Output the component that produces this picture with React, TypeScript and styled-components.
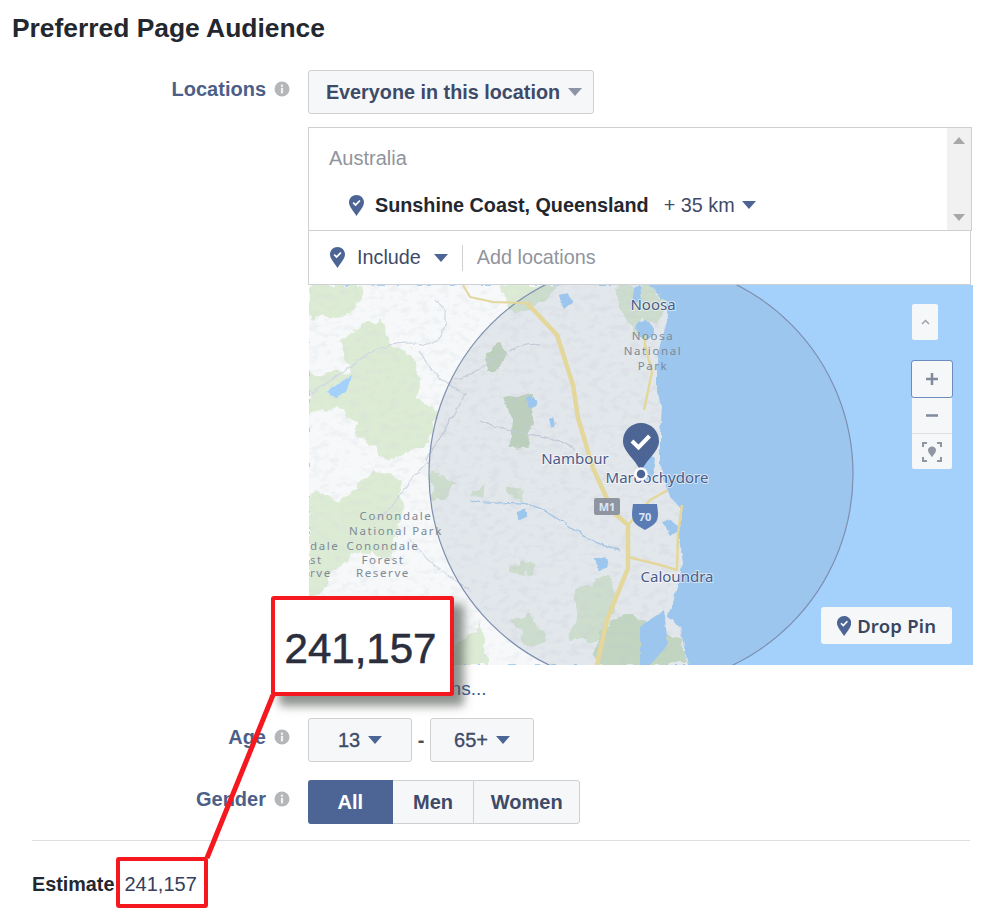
import React from 'react';
import styled, { createGlobalStyle } from 'styled-components';

const GlobalStyle = createGlobalStyle`
  html, body {
    margin: 0;
    background: #fff;
  }
  body {
    font-family: "Liberation Sans", Arial, sans-serif;
  }
`;

const Page = styled.div`
  position: relative;
  width: 990px;
  height: 912px;
  overflow: hidden;
`;

const Title = styled.h1`
  margin: 0;
  padding: 12px 0 0 12px;
  height: 70px;
  box-sizing: border-box;
  font-size: 26.4px;
  line-height: 32px;
  font-weight: 700;
  color: #23272f;
`;

const Row = styled.div`
  display: grid;
  grid-template-columns: 308px 1fr;
  margin-bottom: ${p => p.$gap ?? 0}px;
`;

const LabelCell = styled.div`
  display: flex;
  justify-content: flex-end;
  align-items: center;
  gap: 8px;
  height: 38px;
  padding-right: 18px;
  font-size: 20px;
  font-weight: 700;
  color: #4d5f88;
`;

const Select = styled.div`
  display: inline-flex;
  align-items: center;
  justify-content: center;
  gap: 8px;
  box-sizing: border-box;
  width: ${p => p.$w}px;
  height: 44px;
  padding-left: ${p => p.$inset ?? 0}px;
  background: #f6f7f9;
  border: 1px solid #ced0d4;
  border-radius: 3px;
  font-size: ${p => (p.$light ? 20 : 19.8)}px;
  font-weight: ${p => (p.$light ? 400 : 700)};
  -webkit-text-stroke: ${p => (p.$light ? '0.35px' : '0')};
  color: #3f4a68;
`;

const Controls = styled.div`
  display: flex;
  align-items: center;
`;

const Dash = styled.span`
  width: 18px;
  text-align: center;
  font-size: 20px;
  font-weight: 700;
  color: #4b4f56;
`;

const LocationPanel = styled.div`
  width: 664px;
  margin-top: 13px;
`;

const SelectedBox = styled.div`
  display: flex;
  box-sizing: border-box;
  height: 104px;
  border: 1px solid #ced0d4;
`;

const SelectedList = styled.div`
  flex: 1;
  padding: 16px 0 0 20px;
`;

const Country = styled.div`
  font-size: 20px;
  line-height: 28px;
  color: #90949c;
`;

const Place = styled.div`
  display: flex;
  align-items: center;
  margin: 19px 0 0 20px;
  height: 28px;
`;

const PlaceName = styled.b`
  margin-left: 11px;
  font-size: 19.8px;
  color: #23272f;
`;

const Radius = styled.span`
  margin: 0 7px 0 15px;
  font-size: 19.8px;
  color: #3f4a68;
`;

const Scrollbar = styled.div`
  display: flex;
  flex-direction: column;
  justify-content: space-between;
  align-items: center;
  width: 24px;
  padding: 9px 0;
  box-sizing: border-box;
  background: #f1f1f1;
`;

const IncludeRow = styled.div`
  display: flex;
  align-items: center;
  box-sizing: border-box;
  width: 663px;
  height: 54px;
  padding-left: 21px;
  border: 1px solid #ced0d4;
  border-top: 0;
`;

const IncludeText = styled.span`
  margin: 0 13px 0 12px;
  font-size: 19.8px;
  color: #3f4a68;
`;

const Separator = styled.span`
  width: 1px;
  height: 26px;
  margin: 0 14px;
  background: #ced0d4;
`;

const Placeholder = styled.span`
  font-size: 19.8px;
  color: #90949c;
`;

const MapBox = styled.div`
  position: relative;
  width: 664px;
  height: 380px;
  margin-left: 1px;
  overflow: hidden;
  background: #a3d1fc;
`;

const MapSvg = styled.svg`
  display: block;
`;

const PlaceLabel = styled.text`
  font-family: "Noto Sans", sans-serif;
  font-size: 15px;
  fill: #4a5c88;
  text-anchor: middle;
  paint-order: stroke;
  stroke: rgba(255, 255, 255, 0.55);
  stroke-width: 2px;
`;

const ParkLabel = styled.text`
  font-family: "Noto Sans", sans-serif;
  font-size: 11.5px;
  letter-spacing: 1.6px;
  fill: #7d8a97;
  text-anchor: ${p => (p.$start ? 'start' : 'middle')};
`;

const ShieldLabel = styled.text`
  font-family: "Noto Sans", sans-serif;
  font-size: 11px;
  font-weight: 700;
  fill: #dce7f5;
  text-anchor: middle;
`;

const MapButton = styled.div`
  position: absolute;
  left: 603px;
  top: 19px;
  display: flex;
  align-items: center;
  justify-content: center;
  width: 26px;
  height: 36px;
  background: #f6f7f9;
  border-radius: 2px;
`;

const ZoomStack = styled.div`
  position: absolute;
  left: 603px;
  top: 76px;
  width: 40px;
  background: #f6f7f9;
  border-radius: 2px;
`;

const ZoomButton = styled.div`
  display: flex;
  align-items: center;
  justify-content: center;
  height: 36px;
  box-sizing: border-box;
  border-top: ${p => (p.$first ? '0' : '1px solid #dddfe2')};
  outline: ${p => (p.$focus ? '1.5px solid #6d8dc0' : '0')};
  border-radius: ${p => (p.$focus ? '2px' : '0')};
`;

const DropPin = styled.div`
  position: absolute;
  right: 21px;
  bottom: 21px;
  display: flex;
  align-items: center;
  justify-content: center;
  gap: 6px;
  width: 131px;
  height: 37px;
  background: #f6f7f9;
  border-radius: 3px;
  font-family: "Noto Sans", sans-serif;
  font-size: 18.5px;
  font-weight: 600;
  color: #3a4560;
  letter-spacing: 0.2px;
`;

const BulkLink = styled.div`
  height: 53px;
  line-height: 47px;
  font-size: 19px;
  color: #3b5998;
`;

const Segmented = styled.div`
  display: flex;
  width: 272px;
  height: 44px;
  box-sizing: border-box;
  border: 1px solid #ced0d4;
  border-radius: 3px;
  background: #f6f7f9;
`;

const Segment = styled.div`
  display: flex;
  align-items: center;
  justify-content: center;
  width: ${p => p.$w}px;
  margin: ${p => (p.$active ? '-1px 0 -1px -1px' : '0')};
  font-size: 20px;
  font-weight: 700;
  border-radius: ${p => (p.$active ? '3px 0 0 3px' : '0')};
  border-left: ${p => (p.$divider ? '1px solid #ced0d4' : '0')};
  color: ${p => (p.$active ? '#fff' : '#3f4a68')};
  background: ${p => (p.$active ? '#4d6595' : 'transparent')};
`;

const Divider = styled.hr`
  width: 938px;
  margin: 16px 0 0 32px;
  border: 0;
  border-top: 1px solid #dddfe2;
`;

const EstimateRow = styled.div`
  display: flex;
  gap: 10px;
  padding: 31px 0 0 32px;
  line-height: 24px;
  font-size: 20px;
  color: #34405c;
`;

const EstimateLabel = styled.b`
  font-size: 19.8px;
  color: #23272f;
`;

const SmallHighlight = styled.div`
  position: absolute;
  left: 116px;
  top: 857px;
  width: 92px;
  height: 51px;
  box-sizing: border-box;
  border: 4px solid #f5191f;
  border-radius: 3px;
`;

const Callout = styled.div`
  position: absolute;
  left: 271px;
  top: 596px;
  display: flex;
  align-items: center;
  justify-content: center;
  box-sizing: border-box;
  width: 183px;
  height: 100px;
  padding: 6px 4px 0 0;
  background: #fff;
  border: 4px solid #f5191f;
  border-radius: 3px;
  box-shadow: 9px 9px 10px 1px rgba(75, 80, 75, 0.62);
  font-size: 42px;
  color: #2b2e3c;
  -webkit-text-stroke: 0.6px #2b2e3c;
`;

const Leader = styled.svg`
  position: absolute;
  left: 200px;
  top: 690px;
`;

const InfoIcon = () => (
  <svg width="16" height="16" viewBox="0 0 16 16">
    <circle cx="8" cy="8" r="7.5" fill="#b4b7b8" />
    <rect x="6.9" y="6.8" width="2.2" height="5.6" fill="#f2f2f2" />
    <rect x="6.9" y="3.6" width="2.2" height="2.1" fill="#f2f2f2" />
  </svg>
);

const Caret = ({ color = '#4d6595' }: { color?: string }) => (
  <svg width="14" height="8" viewBox="0 0 14 8">
    <path d="M0 0h14L7 8z" fill={color} />
  </svg>
);

const Pin = ({ size = 21 }: { size?: number }) => (
  <svg width={(size * 15) / 21} height={size} viewBox="0 0 15 21">
    <path d="M7.5 0C3.4 0 0 3.2 0 7.3c0 4.6 4.6 9 7.5 13.7C10.400 16.300 15 11.900 15 7.300 15 3.200 11.600 0 7.500 0z" fill="#4d6595" />
    <path d="M4.200 7.600l2.400 2.400 4.300-4.500" fill="none" stroke="#fff" strokeWidth="1.800" />
  </svg>
);

const COAST =
  'M309 285H648L662 300 668 318 660 345 657 367 657 393 662 407 660 433 660 467 670 497 682 510 678 533 683 563 673 603 667 617 680 627 688 665H309z';

const MapArt = () => (
  <MapSvg width="664" height="380" viewBox="309 285 664 380">
    <defs>
      <clipPath id="radius">
        <circle cx="641" cy="474" r="212" />
      </clipPath>
      <clipPath id="land">
        <path d={COAST} />
      </clipPath>
      <filter id="rough" x="-5%" y="-5%" width="110%" height="110%">
        <feTurbulence type="fractalNoise" baseFrequency="0.07" numOctaves="3" seed="4" />
        <feDisplacementMap in="SourceGraphic" scale="14" xChannelSelector="R" yChannelSelector="G" />
      </filter>
      <filter id="fine" x="-5%" y="-5%" width="110%" height="110%">
        <feTurbulence type="fractalNoise" baseFrequency="0.12" numOctaves="2" seed="9" />
        <feDisplacementMap in="SourceGraphic" scale="5" xChannelSelector="R" yChannelSelector="G" />
      </filter>
      <filter id="relief" x="0" y="0" width="100%" height="100%">
        <feTurbulence type="fractalNoise" baseFrequency="0.1 0.16" numOctaves="3" seed="12" />
        <feColorMatrix values="0 0 0 0 0.66  0 0 0 0 0.69  0 0 0 0 0.74  4 0 0 0 -2" />
      </filter>
    </defs>
    {/* land, east edge follows the coast */}
    <path d={COAST} fill="#f6f8f9" filter="url(#fine)" />
    {/* parks */}
    <g fill="#dcebd4" filter="url(#rough)">
      <path d="M309 285H362L358 310 330 322 318 315 309 322z" />
      <path d="M340 340L382 315 390 345 418 362 414 398 437 412 430 442 387 462 357 432 345 412 309 410 309 375 350 372z" />
      <path d="M309 490L340 500 375 470 402 480 400 520 392 560 360 552 335 565 325 590 309 600z" />
      <path d="M486 352L500 342 510 358 495 372 487 372z" fill="#c9dcc0" />
      <path d="M505 395L535 392 532 420 530 445 508 448 510 420z" fill="#c9dcc0" />
      <path d="M432 470L455 482 450 500 432 500zM470 490L485 485 482 498 468 497zM508 490L520 485 522 500 510 498z" />
      <path d="M505 565L535 562 530 572 508 574z" />
      <path d="M575 590L610 575 616 610 596 640 570 640 575 615z" />
      <path d="M600 630L625 612 655 630 680 640 688 665H595z" fill="#cfe3c6" />
      <path d="M510 620L530 612 548 640 530 650z" />
      <path d="M615 285H650L664 302 660 325 640 320 640 340 625 318z" />
      <path d="M500 285H560L540 305 520 315 505 305z" />
      <path d="M455 645L480 625 490 665H450z" />
    </g>
    <rect x="309" y="285" width="380" height="380" filter="url(#relief)" clipPath="url(#land)" opacity="0.22" />
    <g fill="#a3d1fc" filter="url(#fine)">
      <path d="M326 392L352 375 346 392 336 397z" />
      <path d="M558 295L568 293 574 304 564 308z" />
      <path d="M527 399L534 396 537 404 530 410zM549 420L553 418 555 425 551 427z" />
      <path d="M516 512L526 508 528 516 520 520zM595 559L605 556 608 566 598 572z" />
      <circle cx="645" cy="330" r="9" />
      <path d="M640 458C648 452 656 456 656 466L650 480 640 476z" />
      <path d="M662 522L672 520 680 530 670 536zM640 627L664 610 668 645 650 665 640 665z" />
      <path d="M634 288L640 285 642 300 632 304z" />
    </g>
    {/* rivers */}
    <g fill="none" stroke="#d0d7e2" strokeWidth="1.200" filter="url(#fine)">
      <path d="M309 395C325 385 352 365 375 350 392 345 405 340 428 345 445 340 455 310 435 300" />
      <path d="M420 350C430 375 445 380 465 395 455 410 440 440 425 460" />
      <path d="M430 460C410 475 395 510 375 520" />
      <path d="M470 500C500 510 520 490 560 520 590 540 600 545 620 550" stroke="#a9cdf0" />
      <path d="M480 420C520 440 550 430 575 450M455 380C490 370 510 340 540 345" />
      <path d="M410 540C430 565 440 570 470 590" />
    </g>
    {/* radius overlay */}
    <g clipPath="url(#radius)">
      <rect x="309" y="285" width="664" height="380" fill="#7f8da5" fillOpacity="0.16" />
    </g>
    <circle cx="641" cy="474" r="212" fill="none" stroke="#7e8fb0" strokeWidth="1.200" />
    {/* roads */}
    <g fill="none" stroke="#e4d79b" strokeLinejoin="round">
      <path d="M463 285L470 297 493 302 527 303" strokeWidth="2" />
      <path d="M527 303L557 335 573 385 578 418 593 468 613 512 628 525 628 568 607 620 597 665" strokeWidth="4.500" />
      <path d="M628 557L660 565 677 570 678 533 682 505" strokeWidth="2.500" />
      <path d="M645 335L645 345 652 372 644 410" strokeWidth="2.500" />
      <path d="M628 525L650 500 668 490" strokeWidth="2.500" />
    </g>
    <PlaceLabel x="653" y="310">Noosa</PlaceLabel>
    <ParkLabel x="653" y="340">Noosa</ParkLabel>
    <ParkLabel x="653" y="355">National</ParkLabel>
    <ParkLabel x="653" y="370">Park</ParkLabel>
    <ParkLabel x="396" y="520">Conondale</ParkLabel>
    <ParkLabel x="396" y="535">National Park</ParkLabel>
    <ParkLabel x="383" y="550">Conondale</ParkLabel>
    <ParkLabel x="383" y="564">Forest</ParkLabel>
    <ParkLabel x="383" y="577">Reserve</ParkLabel>
    <ParkLabel $start x="310" y="550">dale</ParkLabel>
    <ParkLabel $start x="310" y="564">st</ParkLabel>
    <ParkLabel $start x="310" y="577">rve</ParkLabel>
    <PlaceLabel x="575" y="464">Nambour</PlaceLabel>
    <PlaceLabel x="657" y="483">Maroochydore</PlaceLabel>
    <PlaceLabel x="677" y="582">Caloundra</PlaceLabel>
    {/* highway shields */}
    <rect x="594" y="498" width="26" height="17" rx="2" fill="#8f95a0" />
    <ShieldLabel x="607" y="511">M1</ShieldLabel>
    <path d="M633 504h24c1 8 2 13-1 18-3 4-8 6-11 8-3-2-8-4-11-8-3-5-2-10-1-18z" fill="#5b7bb5" />
    <ShieldLabel x="645" y="521">70</ShieldLabel>
    {/* main marker */}
    <path
      d="M641 423c-10 0-18 8-18 18 0 11 12 17 18 31 6-14 18-20 18-31 0-10-8-18-18-18z"
      fill="#4d6595"
    />
    <path d="M632 441l6.500 6.500 11-11.500" fill="none" stroke="#fff" strokeWidth="4" />
    <circle cx="641" cy="474" r="5.500" fill="#4d6595" stroke="#fff" strokeWidth="2.500" />
  </MapSvg>
);

export default function App() {
  return (
    <Page>
      <GlobalStyle />
      <Title>Preferred Page Audience</Title>

      <Row>
        <LabelCell>
          Locations <InfoIcon />
        </LabelCell>
        <Select $w={286} $inset={6}>
          Everyone in this location <Caret color="#8d94a5" />
        </Select>
      </Row>

      <Row>
        <div />
        <LocationPanel>
          <SelectedBox>
            <SelectedList>
              <Country>Australia</Country>
              <Place>
                <Pin />
                <PlaceName>Sunshine Coast, Queensland</PlaceName>
                <Radius>+ 35 km</Radius>
                <Caret />
              </Place>
            </SelectedList>
            <Scrollbar>
              <svg width="12" height="7" viewBox="0 0 12 7"><path d="M6 0l6 7H0z" fill="#a8a8a8" /></svg>
              <svg width="12" height="7" viewBox="0 0 12 7"><path d="M0 0h12L6 7z" fill="#a8a8a8" /></svg>
            </Scrollbar>
          </SelectedBox>
          <IncludeRow>
            <Pin />
            <IncludeText>Include</IncludeText>
            <Caret />
            <Separator />
            <Placeholder>Add locations</Placeholder>
          </IncludeRow>
          <MapBox>
            <MapArt />
            <MapButton>
              <svg width="9" height="6" viewBox="0 0 9 6">
                <path d="M1 5l3.500-3.500L8 5" fill="none" stroke="#9ca3ad" strokeWidth="1.500" />
              </svg>
            </MapButton>
            <ZoomStack>
              <ZoomButton $first $focus>
                <svg width="14" height="14" viewBox="0 0 14 14">
                  <path d="M7 1v12M1 7h12" stroke="#7f8a9c" strokeWidth="2.500" />
                </svg>
              </ZoomButton>
              <ZoomButton>
                <svg width="14" height="3" viewBox="0 0 14 3">
                  <path d="M1 1.500h12" stroke="#7f8a9c" strokeWidth="2.500" />
                </svg>
              </ZoomButton>
              <ZoomButton>
                <svg width="20" height="20" viewBox="0 0 20 20" fill="none">
                  <path d="M1 5V1h4M15 1h4v4M19 15v4h-4M5 19H1v-4" stroke="#8f97a3" strokeWidth="2" />
                  <path d="M10 4.500c-2.500 0-4 1.800-4 3.800 0 2.700 2.700 4.500 4 7 1.300-2.500 4-4.300 4-7 0-2-1.500-3.800-4-3.800z" fill="#8f97a3" />
                </svg>
              </ZoomButton>
            </ZoomStack>
            <DropPin>
              <Pin size={20} />
              Drop Pin
            </DropPin>
          </MapBox>
          <BulkLink>Add Bulk Locations...</BulkLink>
        </LocationPanel>
      </Row>

      <Row $gap={18}>
        <LabelCell>
          Age <InfoIcon />
        </LabelCell>
        <Controls>
          <Select $w={104} $light>
            13 <Caret />
          </Select>
          <Dash>-</Dash>
          <Select $w={104} $light>
            65+ <Caret />
          </Select>
        </Controls>
      </Row>

      <Row>
        <LabelCell>
          Gender <InfoIcon />
        </LabelCell>
        <Segmented>
          <Segment $active $w={85}>All</Segment>
          <Segment $w={81}>Men</Segment>
          <Segment $divider $w={105}>Women</Segment>
        </Segmented>
      </Row>

      <Divider />

      <EstimateRow>
        <EstimateLabel>Estimate</EstimateLabel>
        <span>241,157</span>
      </EstimateRow>

      {/* annotation on top of the screenshot */}
      <Leader width="90" height="175" viewBox="0 0 90 175">
        <path d="M73 5L7 168" stroke="#f5191f" strokeWidth="5" fill="none" />
      </Leader>
      <SmallHighlight />
      <Callout>241,157</Callout>
    </Page>
  );
}
